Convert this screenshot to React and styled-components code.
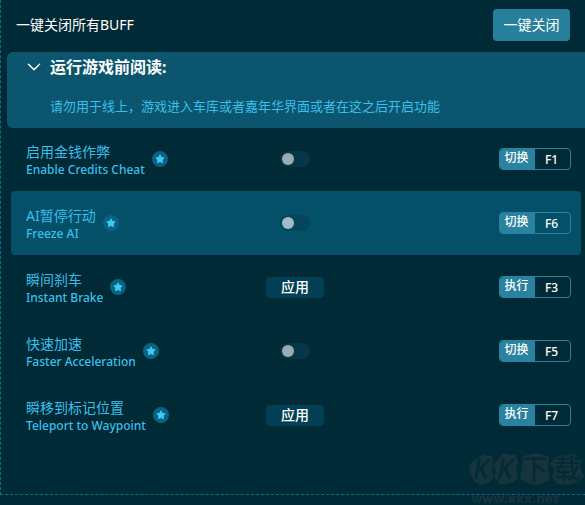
import styled, { createGlobalStyle } from "styled-components";
import { ChevronDown } from "lucide-react";

const GlobalStyle = createGlobalStyle`
  * {
    box-sizing: border-box;
  }
  body {
    margin: 0;
    min-height: 100vh;
    overflow: hidden;
    background: #002a35;
    color: #ffffff;
    font-family: "Noto Sans", "Noto Sans CJK SC", sans-serif;
    font-size: 14px;
  }
  button,
  input {
    font-family: inherit;
  }
`;

const Page = styled.div`
  position: relative;
  min-height: 100vh;
  overflow: hidden;
`;
const Panel = styled.main`
  border-left: 1px dashed #0b6c8c;
  border-bottom: 1px dashed #0b6c8c;
  padding-bottom: 47px;
`;
const Header = styled.header`
  display: flex;
  align-items: center;
  justify-content: space-between;
  height: 52px;
  padding: 0 15px 2px;
`;
const HeaderTitle = styled.h1`
  margin: 0;
  font-size: 14px;
  line-height: 20px;
  font-weight: 400;
`;
const CloseButton = styled.button`
  min-width: 77px;
  height: 32px;
  padding: 0 10px;
  border: 0;
  border-radius: 4px;
  background: #26809b;
  color: #ffffff;
  font-size: 14px;
  line-height: 20px;
`;
const Note = styled.section`
  height: 76px;
  margin-left: 6px;
  padding: 3px 15px;
  border-radius: 6px 0 0 6px;
  background: #0b566e;
`;
const NoteToggle = styled.button`
  display: flex;
  align-items: center;
  gap: 4px;
  padding: 0;
  border: 0;
  background: none;
  color: #ffffff;
  font-size: 16px;
  line-height: 24px;
  font-weight: 700;
`;
const NoteText = styled.p`
  margin: 17px 0 0 28px;
  color: #3bbfeb;
  font-size: 13px;
  line-height: 20px;
  white-space: nowrap;
`;
const List = styled.ul`
  margin: -1px 4px 0 10px;
  padding: 0;
  list-style: none;
`;
const Row = styled.li`
  display: grid;
  grid-template-columns: 240px 1fr auto;
  align-items: center;
  height: 64px;
  padding: 0 10px 0 15px;
  border-radius: 4px;
  background: ${({ $active }) => ($active ? "#045068" : "transparent")};
`;
const Name = styled.div`
  display: flex;
  align-items: center;
  gap: 7px;
`;
const Label = styled.label`
  display: flex;
  flex-direction: column;
  color: #3bbfeb;
  font-size: 14px;
  line-height: 18px;
  white-space: nowrap;
  padding-top: 2px;
`;
const SubLabel = styled.span`
  font-size: 12px;
  line-height: 17px;
  font-weight: 500;
`;
const StarButton = styled.button`
  display: flex;
  align-items: center;
  justify-content: center;
  width: 16px;
  height: 16px;
  padding: 0;
  border: 0;
  border-radius: 50%;
  background: #0a6283;
`;
const Switch = styled.input`
  appearance: none;
  display: flex;
  align-items: center;
  justify-self: start;
  width: 30px;
  height: 16px;
  margin: 0 0 0 14px;
  padding: 0 2px;
  border-radius: 8px;
  background: ${({ $active }) => ($active ? "#05465b" : "#043748")};

  &::before {
    content: "";
    width: 12px;
    height: 12px;
    border-radius: 50%;
    background: ${({ $active }) => ($active ? "#9fbcc8" : "#9babb2")};
  }
  &:checked {
    justify-content: flex-end;
  }
`;
const ApplyButton = styled.button`
  justify-self: start;
  width: 58px;
  height: 21px;
  padding: 0;
  border: 0;
  border-radius: 4px;
  background: #044055;
  color: #ffffff;
  font-size: 14px;
  line-height: 20px;
  font-weight: 500;
`;
const Hotkey = styled.button`
  display: flex;
  width: 72px;
  height: 22px;
  padding: 0;
  border: 1px solid #2983a0;
  border-radius: 4px;
  background: transparent;
  color: #ffffff;
  overflow: hidden;
`;
const HotkeyAction = styled.span`
  width: 35px;
  height: 20px;
  padding-right: 2px;
  background: #2983a0;
  font-size: 12px;
  line-height: 18px;
  font-weight: 500;
`;
const HotkeyKey = styled.span`
  flex: 1;
  padding-right: 2px;
  font-size: 12px;
  line-height: 22px;
  font-weight: 500;
`;
const Watermark = styled.div`
  position: absolute;
  right: 0;
  bottom: 0;
  width: 116px;
  height: 54px;
  pointer-events: none;
`;

const items = [
  { id: "credits", name: "启用金钱作弊", english: "Enable Credits Cheat", type: "toggle", hotkey: "F1" },
  { id: "freeze", name: "AI暂停行动", english: "Freeze AI", type: "toggle", hotkey: "F6", active: true },
  { id: "brake", name: "瞬间刹车", english: "Instant Brake", type: "apply", hotkey: "F3" },
  { id: "acceleration", name: "快速加速", english: "Faster Acceleration", type: "toggle", hotkey: "F5" },
  { id: "teleport", name: "瞬移到标记位置", english: "Teleport to Waypoint", type: "apply", hotkey: "F7" },
];

function Star() {
  return (
    <svg width="10" height="10" viewBox="0 0 10 10" fill="#40c9f5">
      <path
        d="M5 .7 6.3 3.3 9.2 3.8 7.2 5.9 7.6 8.8 5 7.5 2.4 8.8 2.8 5.9 .8 3.8 3.7 3.3Z"
        stroke="#40c9f5"
        strokeWidth="0.8"
        strokeLinejoin="round"
      />
    </svg>
  );
}

function CheatRow({ item }) {
  return (
    <Row $active={item.active}>
      <Name>
        <Label htmlFor={item.id}>
          {item.name}
          <SubLabel>{item.english}</SubLabel>
        </Label>
        <StarButton type="button" aria-label="Favorite">
          <Star />
        </StarButton>
      </Name>
      {item.type === "toggle" ? (
        <Switch id={item.id} type="checkbox" $active={item.active} />
      ) : (
        <ApplyButton id={item.id} type="button">
          应用
        </ApplyButton>
      )}
      <Hotkey type="button">
        <HotkeyAction>{item.type === "toggle" ? "切换" : "执行"}</HotkeyAction>
        <HotkeyKey>{item.hotkey}</HotkeyKey>
      </Hotkey>
    </Row>
  );
}

function SiteMark() {
  return (
    <Watermark>
      <svg width="116" height="54" viewBox="0 0 116 54">
        <g fill="#17343d">
          <path d="M5 9 10 7 13 3 18 5 23 4 24 12 23 19 25 27 20 31 13 34 5 31 3 24 0 20 1 13Z" />
          <path d="M30 7 34 2 41 4 47 4 49 12 47 18 49 27 44 31 37 33 31 33 25 26 27 20 24 15Z" />
          <path d="M54 5 66 2 75 4 80 6 79 17 81 29 70 34 60 33 51 28 53 18Z" />
          <path d="M88 5 98 4 106 3 112 10 111 17 115 25 110 31 99 34 88 33 83 26 85 18 81 13Z" />
        </g>
        <g
          fill="#022b36"
          fontFamily="'Noto Sans', 'Noto Sans CJK SC', sans-serif"
          fontSize="27"
          fontWeight="500"
        >
          <text x="4" y="28" fontStyle="italic">K</text>
          <text x="28" y="28" fontStyle="italic">K</text>
          <text x="52" y="28">下</text>
          <text x="85" y="28">载</text>
        </g>
        <text
          x="2"
          y="52"
          fill="#17343d"
          fontFamily="'DejaVu Sans', sans-serif"
          fontSize="12"
          fontWeight="700"
        >
          www.kkx.net
        </text>
      </svg>
    </Watermark>
  );
}

export default function App() {
  return (
    <Page>
      <GlobalStyle />
      <Panel>
        <Header>
          <HeaderTitle>一键关闭所有BUFF</HeaderTitle>
          <CloseButton type="button">一键关闭</CloseButton>
        </Header>
        <Note>
          <NoteToggle type="button" aria-expanded="true">
            <ChevronDown size={24} strokeWidth={1.6} viewBox="-1 -1 26 26" />
            运行游戏前阅读:
          </NoteToggle>
          <NoteText>请勿用于线上，游戏进入车库或者嘉年华界面或者在这之后开启功能</NoteText>
        </Note>
        <List>
          {items.map((item) => (
            <CheatRow key={item.id} item={item} />
          ))}
        </List>
      </Panel>
      <SiteMark />
    </Page>
  );
}
